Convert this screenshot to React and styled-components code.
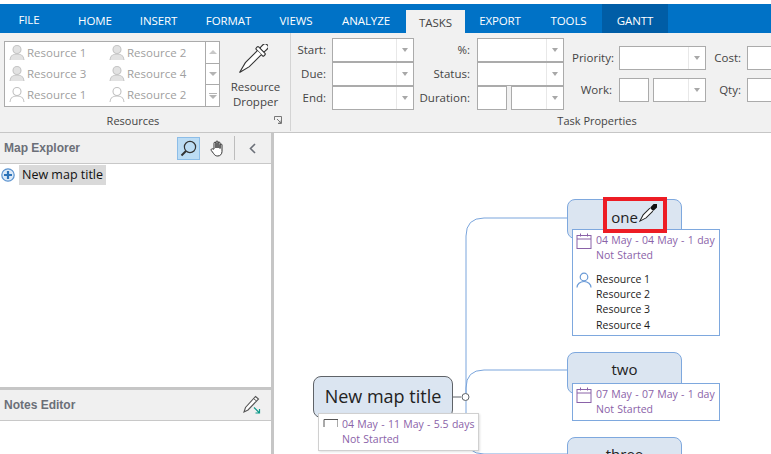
import React from 'react';
import styled, { createGlobalStyle } from 'styled-components';

const Global = createGlobalStyle`
  html, body { margin: 0; padding: 0; background: #fff; }
  * { box-sizing: border-box; }
  #root { width: 771px; height: 454px; overflow: hidden; }
`;
const UI = `"Open Sans", "Noto Sans", "Liberation Sans", sans-serif`;

const Page = styled.div`
  width: 771px; height: 454px; padding-top: 4px; overflow: hidden;
  display: flex; flex-direction: column; font-family: ${UI}; background: #fff;
`;
const TabBar = styled.div`
  height: 29px; flex: none; background: #0072c6; display: flex; align-items: flex-end;
`;
const Tab = styled.div`
  width: ${p => p.$w}px; height: ${p => (p.$active ? 23 : 29)}px;
  display: flex; align-items: center; justify-content: center;
  font-size: 11.5px; letter-spacing: -0.1px;
  color: ${p => (p.$active ? '#444' : '#fff')};
  background: ${p => (p.$active ? '#f1f1f1' : p.$dark ? '#005da6' : 'transparent')};
  padding-top: ${p => (p.$up ? 2 : p.$active ? 1 : 4)}px;
  padding-right: ${p => (p.$up ? 6 : 0)}px;
`;
const Ribbon = styled.div`
  height: 100px; flex: none; background: #f1f1f1; border-bottom: 1px solid #c6c6c6;
  display: flex; color: #444; overflow: hidden;
`;
const Group = styled.div`
  width: ${p => p.$w}px; flex: none; display: flex; flex-direction: column;
  border-right: ${p => (p.$last ? 'none' : '1px solid #d4d4d4')}; margin-bottom: 1px;
`;
const GroupBody = styled.div`
  flex: 1; display: flex; min-height: 0;
`;
const GroupFooter = styled.div`
  height: 20px; flex: none; display: flex; align-items: center; font-size: 11px; margin-bottom: 1px;
`;
const FooterLabel = styled.div`
  width: ${p => p.$w}px; text-align: center; flex: none;
`;
const Launcher = styled.svg`
  width: 8px; height: 8px; margin-left: 8px; flex: none;
`;
const Gallery = styled.div`
  margin: 8px 0 0 4px; width: 216px; height: 66px; background: #fff; border: 1px solid #ababab;
  display: flex;
`;
const GalleryItems = styled.div`
  flex: 1; display: grid; grid-template-columns: 100px 100px; grid-auto-rows: 21px;
`;
const GalleryItem = styled.div`
  display: flex; align-items: center; gap: 2px; padding-left: 4px;
  font-size: 11.5px; color: #a0a0a0; white-space: nowrap;
`;
const ScrollCol = styled.div`
  width: 15px; flex: none; border-left: 1px solid #ababab; display: flex; flex-direction: column;
`;
const ScrollBtn = styled.div`
  flex: 1; display: flex; flex-direction: column; align-items: center; justify-content: center; gap: 1px;
  & + & { border-top: 1px solid #ababab; }
`;
const Tri = styled.div`
  width: 0; height: 0; border-left: 4px solid transparent; border-right: 4px solid transparent;
  ${p => (p.$up ? 'border-bottom: 4px solid #c8c8c8;' : 'border-top: 4px solid #b4b4b4;')}
`;
const Dash = styled.div`
  width: 8px; height: 1px; background: #b4b4b4;
`;
const DropperCol = styled.div`
  width: 70px; margin-left: 1px; display: flex; flex-direction: column; align-items: center;
  padding-top: 11px; font-size: 11.5px; line-height: 15px; text-align: center; color: #444;
`;
const DropperIcon = styled.svg`
  width: 30px; height: 30px; margin: 0 5px 5px 0; flex: none;
`;
const FieldGrid = styled.div`
  display: grid; margin-left: ${p => p.$ml}px; margin-top: ${p => p.$mt}px;
  grid-template-columns: ${p => p.$cols}; column-gap: ${p => p.$gap}px;
  grid-auto-rows: 24px; row-gap: ${p => p.$rowGap || 0}px; align-content: start;
`;
const FieldLabel = styled.div`
  font-size: 11.5px; text-align: right; line-height: 23px; white-space: nowrap; color: #444;
`;
const Combo = styled.div`
  height: 24px; width: ${p => p.$w ? `${p.$w}px` : 'auto'}; background: #fff; border: 1px solid #ababab;
  display: flex; justify-content: flex-end; flex: none;
`;
const ComboArrow = styled.div`
  width: 17px; height: 100%; border-left: 1px solid #e8e8e8; display: flex; align-items: center; justify-content: center;
  &::after { content: ''; border-left: 3.5px solid transparent; border-right: 3.5px solid transparent; border-top: 4px solid #a8a8a8; }
`;
const Pair = styled.div`
  display: flex; gap: 4px;
`;

const Main = styled.div`
  flex: 1; display: flex; min-height: 0;
`;
const Side = styled.div`
  width: 274px; flex: none; border-right: 3px solid #c6c6c6; display: flex; flex-direction: column;
`;
const PaneHead = styled.div`
  height: 31px; flex: none; background: #f0f0f0; border-bottom: 1px solid #c8c8c8;
  display: flex; align-items: center; padding: 0 7px 0 4px;
  font-family: "Liberation Sans", sans-serif; font-weight: 700; font-size: 12px; color: #6b6f78;
`;
const HeadTitle = styled.div`
  flex: 1;
`;
const ToolBtn = styled.div`
  width: 23px; height: 23px; margin-left: ${p => p.$ml || 0}px;
  display: flex; align-items: center; justify-content: center;
  background: ${p => (p.$on ? '#bcdcf4' : 'transparent')};
  border: 1px solid ${p => (p.$on ? '#8cbde8' : 'transparent')};
`;
const HeadSep = styled.div`
  width: 1px; height: 24px; background: #bdbdbd; margin: 0 6px 0 6px;
`;
const Tree = styled.div`
  flex: 1; padding: 1px 0 0 1px; background: #fff;
`;
const TreeRow = styled.div`
  display: flex; align-items: center; gap: 4px; height: 20px;
`;
const TreeLabel = styled.div`
  background: #d9d9d9; height: 20px; padding: 0 3px; font-size: 12.5px; line-height: 20px; color: #111;
`;
const NotesPane = styled.div`
  height: 67px; flex: none; border-top: 3px solid #c6c6c6; background: #fff;
`;
const NotesTool = styled.svg`
  width: 20px; height: 20px; margin-right: 2px;
`;

const Canvas = styled.div`
  flex: 1; position: relative; background: #fff; overflow: hidden;
`;
const Wires = styled.svg`
  position: absolute; left: 0; top: 0; width: 497px; height: 321px;
`;
const Topic = styled.div`
  position: absolute; left: ${p => p.$x - 274}px; top: ${p => p.$y - 133}px;
  width: ${p => p.$w}px; height: ${p => p.$h}px; background: #dbe5f1;
  border: 1px solid ${p => (p.$root ? '#5f6368' : '#7ea8de')}; border-radius: 8px;
  display: flex; justify-content: center; padding-top: ${p => p.$pt}px;
  font-size: ${p => p.$fs}px; line-height: 1.3; color: #222; white-space: nowrap;
`;
const Info = styled.div`
  position: absolute; left: ${p => p.$x - 274}px; top: ${p => p.$y - 133}px;
  width: ${p => p.$w}px; height: ${p => p.$h}px; background: #fff;
  border: 1px solid ${p => (p.$root ? '#d0d0d0' : '#7ea8de')};
  box-shadow: ${p => (p.$root ? '1px 1px 2px rgba(0,0,0,.12)' : 'none')};
  display: grid; grid-template-columns: 20px 1fr; padding: 2px 0 0 3px;
  font-size: 10.5px; line-height: 15.4px; white-space: nowrap;
`;
const InfoIcon = styled.svg`
  width: 16px; height: 16px; margin-top: 1px;
`;
const StubIcon = styled.svg`
  width: 16px; height: 8px; margin-top: 3px;
`;
const Purple = styled.div`
  color: #8a62a8; padding-top: 1px; word-spacing: 0.6px;
`;
const Names = styled.div`
  color: #1c1c1c; margin-top: 6px;
`;
const PersonBlue = styled.svg`
  width: 16px; height: 16px; margin-top: 6px;
`;
const Mark = styled.div`
  position: absolute; left: ${603 - 274}px; top: ${197 - 133}px; width: 64px; height: 36px;
  border: 4px solid #ed1c24;
`;
const CursorIcon = styled.svg`
  position: absolute; left: ${639 - 274}px; top: ${204 - 133}px; width: 18px; height: 18px;
`;

const Person = ({ filled }) => (
  <svg width="16" height="17" viewBox="0 0 16 17" fill={filled ? '#e2e2e2' : '#fff'} stroke={filled ? '#c4c4c4' : '#c0c0c0'} strokeWidth="1.1">
    <circle cx="8" cy="5.5" r="4" />
    <path d="M1 16c0-3.6 2.8-6 7-6s7 2.4 7 6" />
  </svg>
);
const Dropper = () => (
  <g transform="translate(15 15) rotate(45)">
    <rect x="-3" y="-20" width="6" height="8" rx="2.5" fill="#fff" stroke="#333" strokeWidth="1.1" />
    <rect x="-5.5" y="-12.5" width="11" height="3.5" rx="1" fill="#fff" stroke="#333" strokeWidth="1.1" />
    <path d="M-2.8 -9V8L0 19L2.8 8V-9" fill="#fff" stroke="#333" strokeWidth="1.1" />
  </g>
);
const Calendar = () => (
  <InfoIcon viewBox="0 0 16 16" fill="none" stroke="#8a62a8" strokeWidth="1">
    <rect x="1" y="2.5" width="14" height="13" />
    <path d="M1 6h14M4.5 .5v3M11.5 .5v3" />
  </InfoIcon>
);
const Field = ({ label }) => (
  <>
    <FieldLabel>{label}</FieldLabel>
    <Combo><ComboArrow /></Combo>
  </>
);

const tabs = [
  ['FILE', 64, { up: true }], ['HOME', 62], ['INSERT', 65], ['FORMAT', 75], ['VIEWS', 60], ['ANALYZE', 80],
  ['TASKS', 59, { active: true }], ['EXPORT', 70], ['TOOLS', 67], ['GANTT', 66, { dark: true }],
];
const res = [['Resource 1', 1], ['Resource 2', 1], ['Resource 3', 1], ['Resource 4', 1], ['Resource 1', 0], ['Resource 2', 0]];

export default function App() {
  return (
    <Page>
      <Global />
      <TabBar>
        {tabs.map(([t, w, o = {}]) => (
          <Tab key={t} $w={w} $up={o.up} $active={o.active} $dark={o.dark}>{t}</Tab>
        ))}
      </TabBar>
      <Ribbon>
        <Group $w={291}>
          <GroupBody>
            <Gallery>
              <GalleryItems>
                {res.map(([r, f], i) => (
                  <GalleryItem key={i}><Person filled={!!f} />{r}</GalleryItem>
                ))}
              </GalleryItems>
              <ScrollCol>
                <ScrollBtn><Tri $up /></ScrollBtn>
                <ScrollBtn><Tri /></ScrollBtn>
                <ScrollBtn><Dash /><Tri /></ScrollBtn>
              </ScrollCol>
            </Gallery>
            <DropperCol>
              <DropperIcon viewBox="0 0 30 30"><Dropper /></DropperIcon>
              Resource<br />Dropper
            </DropperCol>
          </GroupBody>
          <GroupFooter>
            <FooterLabel $w={266}>Resources</FooterLabel>
            <Launcher viewBox="0 0 8 8" fill="none" stroke="#777" strokeWidth="1">
              <path d="M.5 4V.5H7.5V7.5H4M3 3L7 7M7 4.5V7H4.5" />
            </Launcher>
          </GroupFooter>
        </Group>
        <Group $w={480} $last>
          <GroupBody>
            <FieldGrid $ml={1} $mt={5} $cols="34px 82px" $gap={6}>
              <Field label="Start:" />
              <Field label="Due:" />
              <Field label="End:" />
            </FieldGrid>
            <FieldGrid $ml={0} $mt={5} $cols="56px 87px" $gap={7}>
              <Field label="%:" />
              <Field label="Status:" />
              <FieldLabel>Duration:</FieldLabel>
              <Pair>
                <Combo $w={30} />
                <Combo $w={53}><ComboArrow /></Combo>
              </Pair>
            </FieldGrid>
            <FieldGrid $ml={8} $mt={13} $cols="40px 87px" $gap={7} $rowGap={8}>
              <Field label="Priority:" />
              <FieldLabel>Work:</FieldLabel>
              <Pair>
                <Combo $w={30} />
                <Combo $w={53}><ComboArrow /></Combo>
              </Pair>
            </FieldGrid>
            <FieldGrid $ml={8} $mt={13} $cols="27px 40px" $gap={6} $rowGap={8}>
              <FieldLabel>Cost:</FieldLabel>
              <Combo />
              <FieldLabel>Qty:</FieldLabel>
              <Combo />
            </FieldGrid>
          </GroupBody>
          <GroupFooter>
            <FooterLabel $w={612}>Task Properties</FooterLabel>
          </GroupFooter>
        </Group>
      </Ribbon>
      <Main>
        <Side>
          <PaneHead>
            <HeadTitle>Map Explorer</HeadTitle>
            <ToolBtn $on>
              <svg width="17" height="17" viewBox="0 0 17 17" fill="none" stroke="#333" strokeWidth="1.2">
                <circle cx="10" cy="7" r="5.6" />
                <path d="M6 11L1.5 15.5" strokeWidth="2" />
              </svg>
            </ToolBtn>
            <ToolBtn $ml={5}>
              <svg width="16" height="17" viewBox="0 0 16 17" fill="#fff" stroke="#333" strokeWidth="1">
                <path d="M5 9V3.2a1 1 0 0 1 2 0V8V2a1 1 0 0 1 2 0v6V3a1 1 0 0 1 2 0v5.5V5a1 1 0 0 1 2 0v6.5c0 2.6-1.8 4.5-4.2 4.5-2.2 0-3.2-.9-4.3-2.6L2.3 10.5c-.8-1.3.9-2.4 1.8-1.3z" />
              </svg>
            </ToolBtn>
            <HeadSep />
            <ToolBtn>
              <svg width="9" height="11" viewBox="0 0 9 11" fill="none" stroke="#6b6f78" strokeWidth="1.6">
                <path d="M7 1L2.5 5.5L7 10" />
              </svg>
            </ToolBtn>
          </PaneHead>
          <Tree>
            <TreeRow>
              <svg width="14" height="14" viewBox="0 0 14 14">
                <circle cx="7" cy="7" r="6.2" fill="#dce9f7" stroke="#5b93cf" strokeWidth="1.2" />
                <path d="M3 7h8M7 3v8" stroke="#2e73b8" strokeWidth="2.2" />
              </svg>
              <TreeLabel>New map title</TreeLabel>
            </TreeRow>
          </Tree>
          <NotesPane>
            <PaneHead>
              <HeadTitle>Notes Editor</HeadTitle>
              <NotesTool viewBox="0 0 20 20" fill="none">
                <path d="M13.5 1.5l3 2.5L6 15l-4 2 1.5-4.500z" fill="#fff" stroke="#555" strokeWidth="1.1" />
                <path d="M11.500 3.500l3 2.500" stroke="#555" />
                <path d="M12 12.500l5 5M17.500 14v4h-4" stroke="#0f9a8a" strokeWidth="1.2" />
              </NotesTool>
            </PaneHead>
          </NotesPane>
        </Side>
        <Canvas>
          <Wires viewBox="274 133 497 321" fill="none">
            <path d="M466 397V236Q466 218 484 218H567" stroke="#7aa5dc" />
            <path d="M466 397V388Q466 370 484 370H567" stroke="#7aa5dc" />
            <path d="M466 397V436Q466 454 484 454H567" stroke="#7aa5dc" />
            <path d="M453 397H461" stroke="#5f6368" />
            <circle cx="465.500" cy="397" r="3.500" fill="#fff" stroke="#5f6368" />
          </Wires>
          <Topic $x={567} $y={199} $w={115} $h={40} $pt={8} $fs={15}>one</Topic>
          <Info $x={572} $y={229} $w={148} $h={107}>
            <Calendar />
            <Purple>04 May - 04 May - 1 day<br />Not Started</Purple>
            <PersonBlue viewBox="0 0 16 16" fill="none" stroke="#6a9ad6" strokeWidth="1.2">
              <circle cx="8" cy="5" r="3.800" />
              <path d="M1 15.500c0-3.500 3-6 7-6s7 2.500 7 6" />
            </PersonBlue>
            <Names>Resource 1<br />Resource 2<br />Resource 3<br />Resource 4</Names>
          </Info>
          <Topic $x={567} $y={352} $w={115} $h={42} $pt={7} $fs={15}>two</Topic>
          <Info $x={572} $y={383} $w={148} $h={38}>
            <Calendar />
            <Purple>07 May - 07 May - 1 day<br />Not Started</Purple>
          </Info>
          <Topic $x={567} $y={437} $w={115} $h={40} $pt={7} $fs={15}>three</Topic>
          <Topic $root $x={313} $y={376} $w={140} $h={42} $pt={8} $fs={18}>New map title</Topic>
          <Info $root $x={318} $y={413} $w={161} $h={38}>
            <StubIcon viewBox="0 0 16 8" fill="none" stroke="#555">
              <path d="M2 8V.5H16V8" />
            </StubIcon>
            <Purple>04 May - 11 May - 5.5 days<br />Not Started</Purple>
          </Info>
          <Mark />
          <CursorIcon viewBox="0 0 30 30">
            <g transform="translate(15 15) rotate(45)">
              <rect x="-4" y="-21" width="8" height="13" rx="3" fill="#111" />
              <path d="M-3.500 -8V8L0 19L3.500 8V-8" fill="#fff" stroke="#222" strokeWidth="1.6" />
            </g>
          </CursorIcon>
        </Canvas>
      </Main>
    </Page>
  );
}
